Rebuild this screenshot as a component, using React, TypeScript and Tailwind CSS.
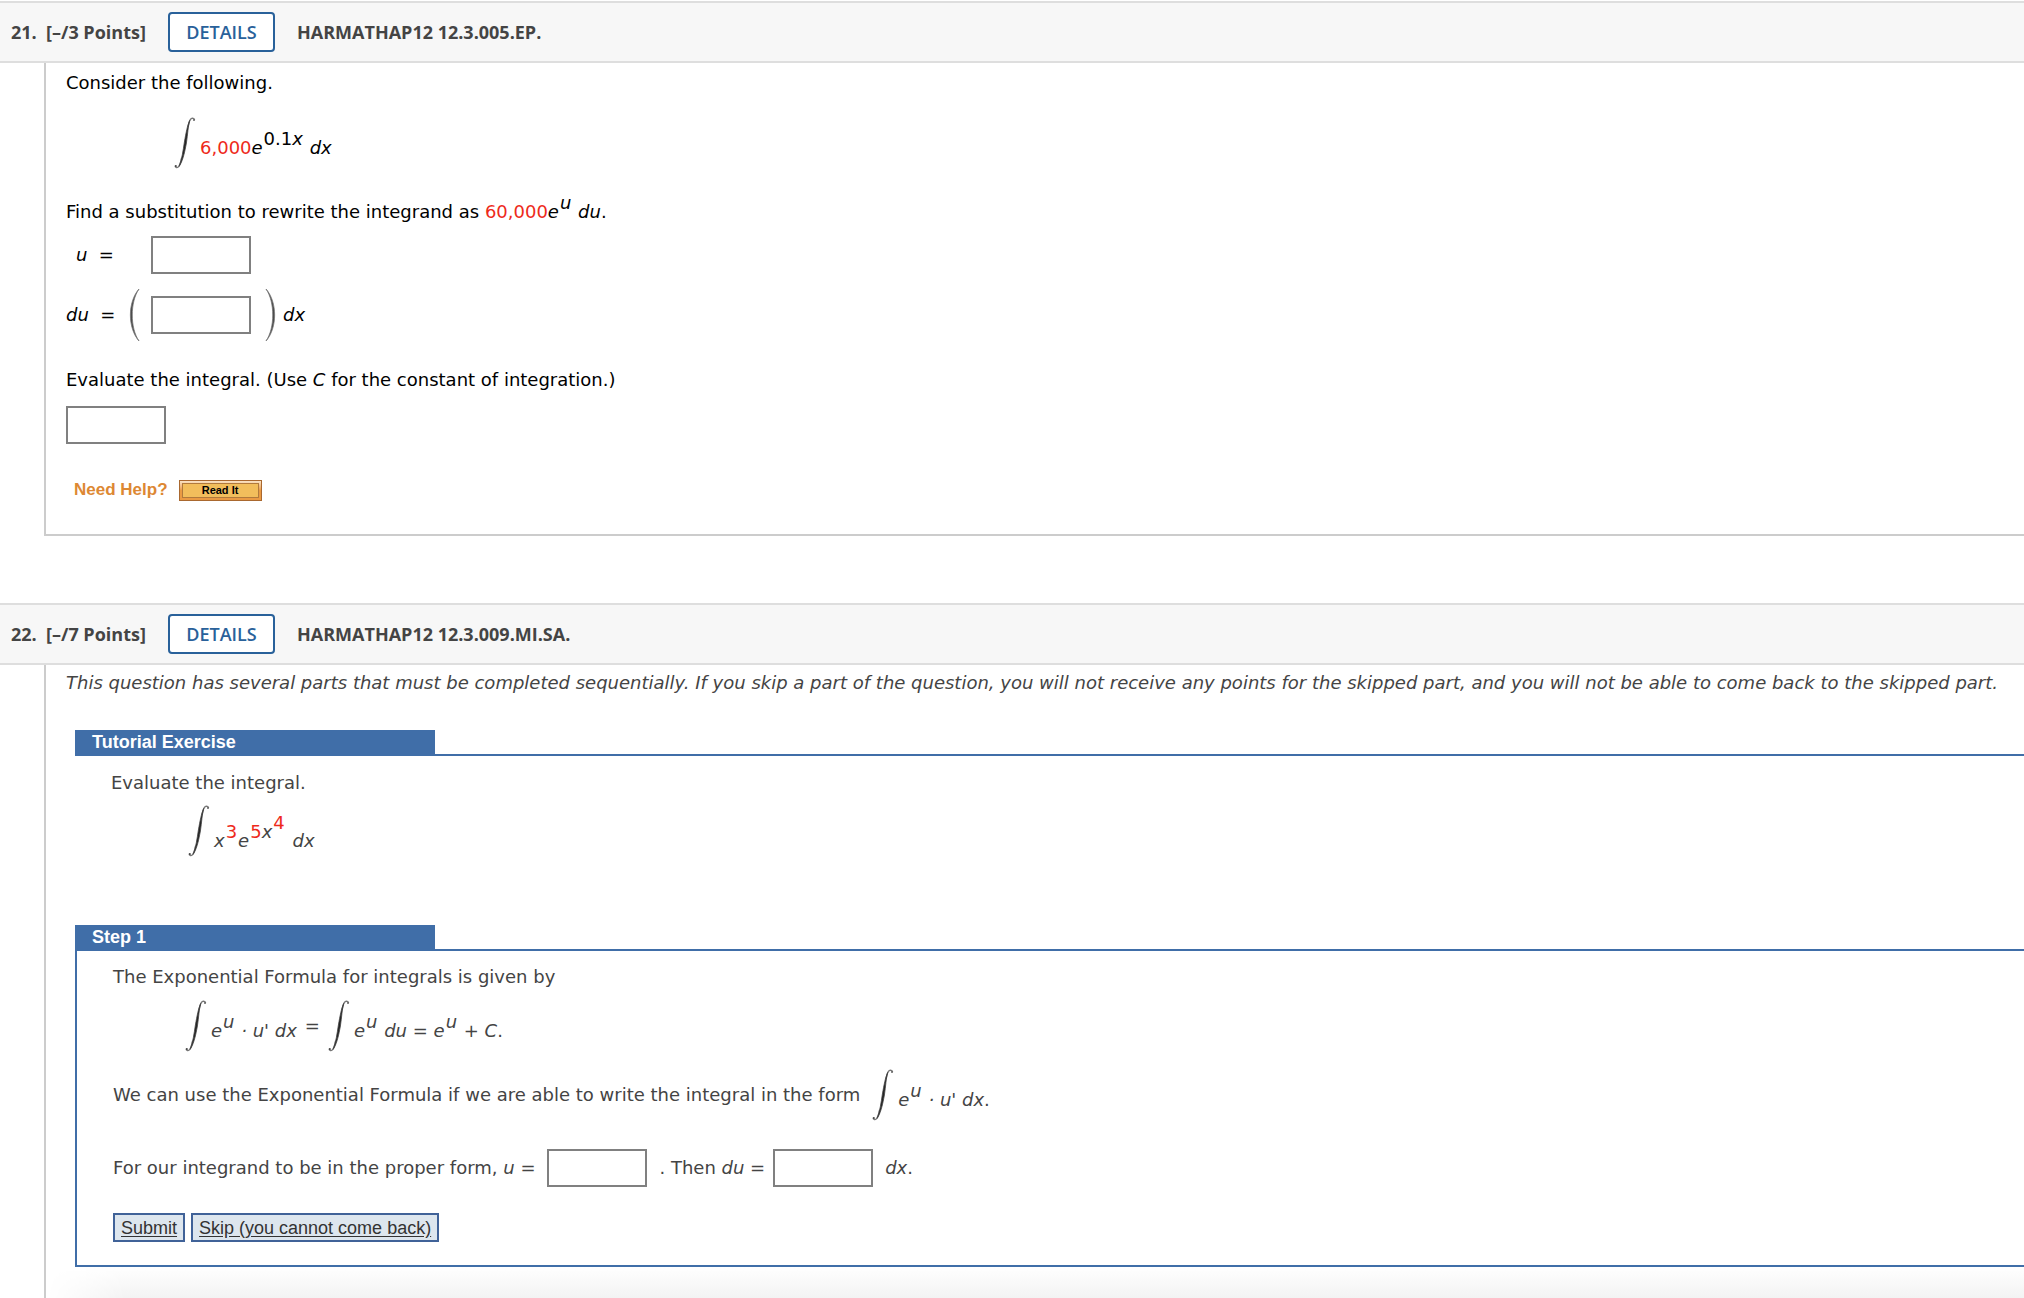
import type { ReactNode } from 'react';

function Integral() {
  return (
    <svg width="22" height="52" viewBox="0 0 22 52" className="shrink-0" role="img" aria-label="integral">
      <path
        d="M20.6 3C20.2 1 17.6 0.4 16 3C15 4.6 14.6 7 14 10M7.6 41C6.8 45.4 6 48.6 4.2 50C2.8 51 1.2 50.4 1.2 48.8"
        fill="none"
        stroke="#777"
        strokeWidth="1.4"
      />
      <path
        d="M15.8 3.4C13.4 8 12 16 10.4 25C9 34 8 42 5.2 49.2C8.8 44 10.8 35 12.4 26C13.8 17 14 9 15.8 3.4Z"
        fill="#222"
        stroke="#444"
        strokeWidth="0.8"
      />
      <circle cx="20" cy="3" r="1" fill="#666" />
      <circle cx="1.8" cy="49" r="1" fill="#444" />
    </svg>
  );
}

function Paren({ right = false }: { right?: boolean }) {
  return (
    <svg width="12" height="54" viewBox="0 0 12 54" className="shrink-0" aria-hidden="true">
      <path
        d={right ? 'M1 1C12.5 14 12.5 40 1 53C10 40 10 14 1 1Z' : 'M11 1C-0.5 14 -0.5 40 11 53C2 40 2 14 11 1Z'}
        fill="#444"
        stroke="#777"
        strokeWidth="0.8"
      />
    </svg>
  );
}

function Red({ children }: { children: ReactNode }) {
  return <span className="not-italic text-[#ee2a1b]">{children}</span>;
}

function Sup({ children }: { children: ReactNode }) {
  return <sup className="px-px text-lg leading-0">{children}</sup>;
}

function Blank({ label }: { label: string }) {
  return (
    <input
      type="text"
      aria-label={label}
      className="h-[38px] w-[100px] shrink-0 border-2 border-[#808080] bg-white px-1 text-lg outline-none"
    />
  );
}

function QuestionHeader({ number, points, code }: { number: string; points: string; code: string }) {
  return (
    <header className="flex h-[62px] shrink-0 items-center border-y-2 border-[#dedede] bg-[#f7f7f7] pl-[11px] font-['Open_Sans',sans-serif] text-lg leading-6 font-bold text-[#444]">
      <span className="w-[35px]">{number}</span>
      <span className="w-[122px]">{points}</span>
      <button
        type="button"
        className="flex h-10 w-[107px] items-center justify-center rounded border-2 border-[#29619a] bg-white pb-px font-semibold text-[#29619a]"
      >
        DETAILS
      </button>
      <h2 className="ml-[22px]">{code}</h2>
    </header>
  );
}

function TabTitle({ children }: { children: ReactNode }) {
  return (
    <div className="border-b-2 border-[#406ea8]">
      <h3 className="h-6 w-[360px] bg-[#406ea8] pl-[17px] font-['Liberation_Sans',Arial,sans-serif] text-lg leading-6 font-bold text-white">
        {children}
      </h3>
    </div>
  );
}

function StepButton({ children }: { children: ReactNode }) {
  return (
    <button
      type="button"
      className="h-[29px] border-2 border-[#406298] bg-[#dde6ee] px-1.5 font-['Liberation_Sans',Arial,sans-serif] text-lg leading-6 text-[#333] underline underline-offset-2"
    >
      {children}
    </button>
  );
}

export default function App() {
  return (
    <div className="flex min-h-screen flex-col bg-white pt-px font-['DejaVu_Sans',Verdana,sans-serif] text-lg leading-6">
      <section>
        <QuestionHeader number="21." points="[–/3 Points]" code="HARMATHAP12 12.3.005.EP." />
        <div className="ml-11 border-b-2 border-l-2 border-[#ccc] pt-2 pb-8 pl-5 text-black">
          <p>Consider the following.</p>
          <div className="mt-[22px] ml-[108px] flex items-center gap-1">
            <Integral />
            <p className="pt-2.5">
              <Red>6,000</Red>
              <i>e</i>
              <Sup>
                0.1<i>x</i>
              </Sup>{' '}
              <i>dx</i>
            </p>
          </div>
          <p className="mt-[31px]">
            Find a substitution to rewrite the integrand as <Red>60,000</Red>
            <i>
              e<Sup>u</Sup> du
            </i>
            .
          </p>
          <div className="mt-3 flex items-center">
            <span className="w-[85px] pl-2.5">
              <i>u</i>&nbsp; =
            </span>
            <Blank label="u" />
          </div>
          <div className="mt-3.5 flex items-center">
            <span className="w-[62px]">
              <i>du</i>&nbsp; =
            </span>
            <Paren />
            <span className="ml-[11px] flex">
              <Blank label="du" />
            </span>
            <span className="mr-1.5 ml-3.5 flex">
              <Paren right />
            </span>
            <i>dx</i>
          </div>
          <p className="mt-[26px]">
            Evaluate the integral. (Use <i>C</i> for the constant of integration.)
          </p>
          <div className="mt-3.5 flex">
            <Blank label="Integral" />
          </div>
          <div className="mt-[34px] flex items-center gap-[11px] pl-2 font-['Liberation_Sans',Arial,sans-serif]">
            <span className="text-[17px] font-bold text-[#dd8833]">Need Help?</span>
            <button
              type="button"
              className="h-[21px] w-[83px] border border-[#a9682f] bg-linear-to-b from-[#f9e3c4] to-[#ea9a43] to-50% p-0.5 text-[11px] leading-[13px] font-bold text-black"
            >
              <span className="block border border-[#b17a3c] bg-[#f2be5c]">Read It</span>
            </button>
          </div>
        </div>
      </section>

      <section className="mt-[67px] flex grow flex-col">
        <QuestionHeader number="22." points="[–/7 Points]" code="HARMATHAP12 12.3.009.MI.SA." />
        <div className="ml-11 flex grow flex-col border-l-2 border-[#ccc] pt-1.5 text-[#444]">
          <p className="pl-5 italic">
            This question has several parts that must be completed sequentially. If you skip a part of the question, you
            will not receive any points for the skipped part, and you will not be able to come back to the skipped part.
          </p>

          <div className="mt-[35px] ml-[29px]">
            <TabTitle>Tutorial Exercise</TabTitle>
            <div className="pt-[15px] pb-[68px] pl-9">
              <p>Evaluate the integral.</p>
              <div className="mt-2.5 ml-[77px] flex items-center gap-1">
                <Integral />
                <p className="pt-5">
                  <i>x</i>
                  <Sup>
                    <Red>3</Red>
                  </Sup>
                  <i>e</i>
                  <Sup>
                    <Red>5</Red>
                    <i>x</i>
                    <Sup>
                      <Red>4</Red>
                    </Sup>
                  </Sup>{' '}
                  <i>dx</i>
                </p>
              </div>
            </div>
          </div>

          <div className="ml-[29px]">
            <TabTitle>Step 1</TabTitle>
            <div className="border-b-2 border-l-2 border-[#406ea8] pt-3.5 pb-[23px] pl-9">
              <p>The Exponential Formula for integrals is given by</p>
              <div className="mt-[11px] ml-[72px] flex items-center gap-1">
                <Integral />
                <i className="pt-2.5">
                  e<Sup>u</Sup> · u' dx
                </i>
                <span className="ml-1">=</span>
                <span className="ml-1 flex">
                  <Integral />
                </span>
                <p className="pt-2.5">
                  <i>
                    e<Sup>u</Sup> du
                  </i>{' '}
                  ={' '}
                  <i>
                    e<Sup>u</Sup>
                  </i>{' '}
                  + <i>C</i>.
                </p>
              </div>
              <div className="mt-[17px] flex items-center">
                <p>We can use the Exponential Formula if we are able to write the integral in the form</p>
                <span className="mr-1 ml-3 flex">
                  <Integral />
                </span>
                <p className="pt-2.5">
                  <i>
                    e<Sup>u</Sup> · u' dx
                  </i>
                  .
                </p>
              </div>
              <div className="mt-7 flex items-center">
                <p>
                  For our integrand to be in the proper form, <i>u</i> =
                </p>
                <span className="mr-3 ml-3 flex">
                  <Blank label="u for our integrand" />
                </span>
                <p>
                  . Then <i>du</i> =
                </p>
                <span className="mr-3 ml-2 flex">
                  <Blank label="du for our integrand" />
                </span>
                <p>
                  <i>dx</i>.
                </p>
              </div>
              <div className="mt-[26px] flex gap-1.5">
                <StepButton>Submit</StepButton>
                <StepButton>Skip (you cannot come back)</StepButton>
              </div>
            </div>
          </div>

          <div className="min-h-[31px] grow bg-linear-to-b from-white to-[#f3f3f3] mask-[linear-gradient(to_right,transparent,black_80px)]" />
        </div>
      </section>
    </div>
  );
}
